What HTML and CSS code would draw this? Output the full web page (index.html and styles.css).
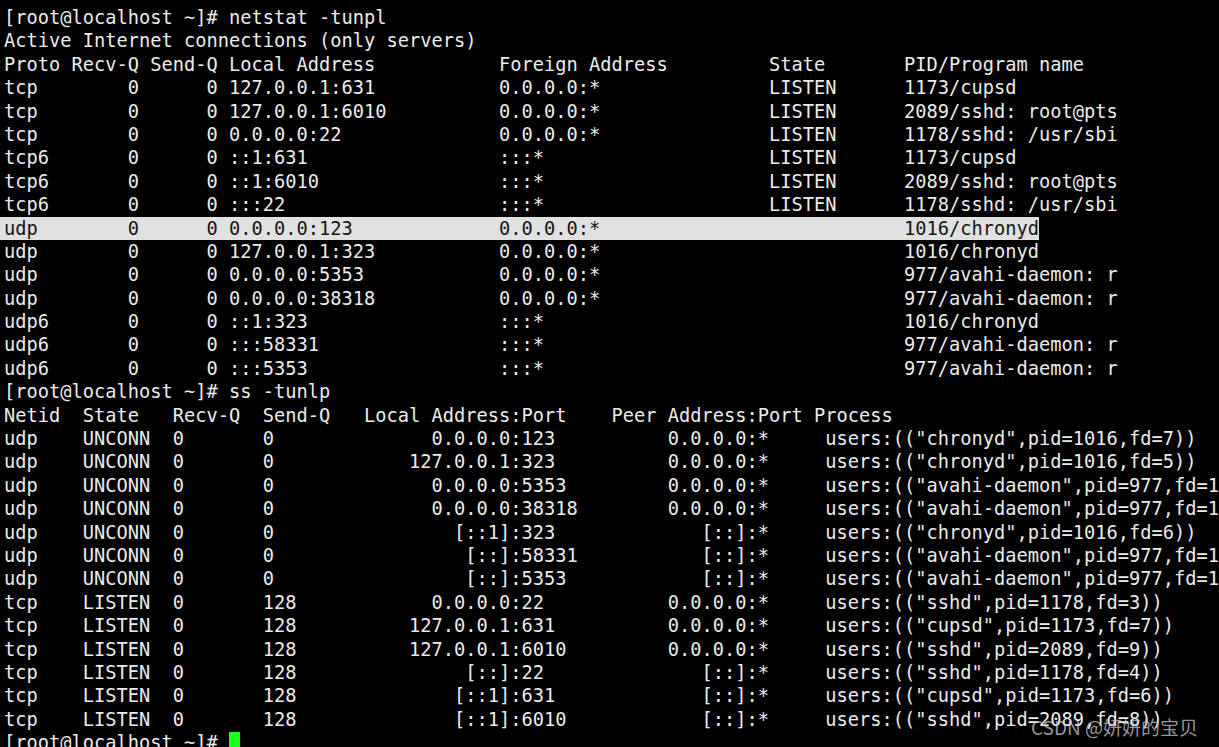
FILE: index.html
```html
<!DOCTYPE html>
<html lang="en">
<head>
  <meta charset="UTF-8">
  <title>netstat / ss</title>
  <link rel="stylesheet" href="styles.css">
</head>
<body>
  <div class="term">
<pre class="out">[root@localhost ~]# netstat -tunpl
Active Internet connections (only servers)
Proto Recv-Q Send-Q Local Address           Foreign Address         State       PID/Program name
tcp        0      0 127.0.0.1:631           0.0.0.0:*               LISTEN      1173/cupsd
tcp        0      0 127.0.0.1:6010          0.0.0.0:*               LISTEN      2089/sshd: root@pts
tcp        0      0 0.0.0.0:22              0.0.0.0:*               LISTEN      1178/sshd: /usr/sbi
tcp6       0      0 ::1:631                 :::*                    LISTEN      1173/cupsd
tcp6       0      0 ::1:6010                :::*                    LISTEN      2089/sshd: root@pts
tcp6       0      0 :::22                   :::*                    LISTEN      1178/sshd: /usr/sbi
<span class="sel">udp        0      0 0.0.0.0:123             0.0.0.0:*                           1016/chronyd</span>
udp        0      0 127.0.0.1:323           0.0.0.0:*                           1016/chronyd
udp        0      0 0.0.0.0:5353            0.0.0.0:*                           977/avahi-daemon: r
udp        0      0 0.0.0.0:38318           0.0.0.0:*                           977/avahi-daemon: r
udp6       0      0 ::1:323                 :::*                                1016/chronyd
udp6       0      0 :::58331                :::*                                977/avahi-daemon: r
udp6       0      0 :::5353                 :::*                                977/avahi-daemon: r
[root@localhost ~]# ss -tunlp
Netid  State   Recv-Q  Send-Q   Local Address:Port    Peer Address:Port Process
udp    UNCONN  0       0              0.0.0.0:123          0.0.0.0:*     users:(("chronyd",pid=1016,fd=7))
udp    UNCONN  0       0            127.0.0.1:323          0.0.0.0:*     users:(("chronyd",pid=1016,fd=5))
udp    UNCONN  0       0              0.0.0.0:5353         0.0.0.0:*     users:(("avahi-daemon",pid=977,fd=12))
udp    UNCONN  0       0              0.0.0.0:38318        0.0.0.0:*     users:(("avahi-daemon",pid=977,fd=11))
udp    UNCONN  0       0                [::1]:323             [::]:*     users:(("chronyd",pid=1016,fd=6))
udp    UNCONN  0       0                 [::]:58331           [::]:*     users:(("avahi-daemon",pid=977,fd=13))
udp    UNCONN  0       0                 [::]:5353            [::]:*     users:(("avahi-daemon",pid=977,fd=14))
tcp    LISTEN  0       128            0.0.0.0:22           0.0.0.0:*     users:(("sshd",pid=1178,fd=3))
tcp    LISTEN  0       128          127.0.0.1:631          0.0.0.0:*     users:(("cupsd",pid=1173,fd=7))
tcp    LISTEN  0       128          127.0.0.1:6010         0.0.0.0:*     users:(("sshd",pid=2089,fd=9))
tcp    LISTEN  0       128               [::]:22              [::]:*     users:(("sshd",pid=1178,fd=4))
tcp    LISTEN  0       128              [::1]:631             [::]:*     users:(("cupsd",pid=1173,fd=6))
tcp    LISTEN  0       128              [::1]:6010            [::]:*     users:(("sshd",pid=2089,fd=8))
[root@localhost ~]# <span class="cursor"></span></pre>
    <div class="watermark">CSDN @妍妍的宝贝</div>
  </div>
</body>
</html>
```

FILE: styles.css
```css
/* Terminal screenshot */
* {
  box-sizing: border-box;
}
body {
  margin: 0;
  background: #000;
  overflow: hidden;
}
.term {
  position: relative;
  width: 1219px;
  height: 747px;
  padding: 6px 0 0 4px;
  overflow: hidden;
}
.out {
  margin: 0;
  font-family: "DejaVu Sans Mono", monospace;
  font-size: 18.7px;
  line-height: 23.39px;
  color: #ebebeb;
  white-space: pre;
}
/* selected row */
.sel {
  display: inline-block;
  vertical-align: top;
  margin-left: -4px;
  padding-left: 4px;
  background: #e1e1e1;
  color: #151515;
}
.cursor {
  display: inline-block;
  vertical-align: top;
  width: 11px;
  height: 23px;
  margin-top: 1px;
  background: #1cff1c;
}
/* CSDN watermark over the last lines */
.watermark {
  position: absolute;
  left: 1031px;
  top: 713px;
  font-family: "Noto Sans CJK SC", "Noto Sans", sans-serif;
  font-size: 19px;
  color: rgba(200, 200, 200, 0.75);
  white-space: nowrap;
}
```
